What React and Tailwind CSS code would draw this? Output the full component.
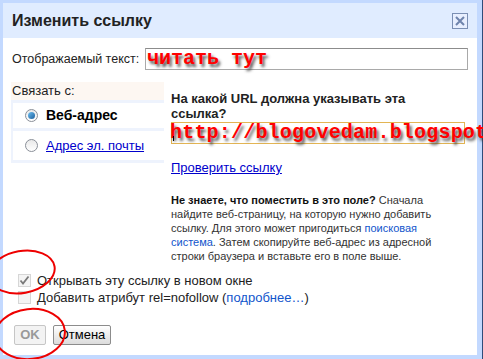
import React from "react";

const redText = {
  textShadow: "2px 3px 3px rgba(60,60,60,0.85)",
};

function Radio({ checked }) {
  return (
    <span className="w-[13px] h-[13px] rounded-full border border-[#8a8f98] bg-gradient-to-b from-[#e9e9e9] to-white flex items-center justify-center shrink-0">
      {checked && <span className="w-[7px] h-[7px] rounded-full bg-gradient-to-br from-[#6ec0f2] to-[#1c5f9c]" />}
    </span>
  );
}

function Check({ checked }) {
  return (
    <span className="w-[13px] h-[13px] border border-[#d6d6d6] bg-[#f4f4f4] flex items-center justify-center shrink-0">
      {checked && (
        <svg width="11" height="11" viewBox="0 0 11 11">
          <path d="M1.5 5.5 L4 8.5 L9.5 1.5" fill="none" stroke="#7a7a7a" strokeWidth="1.8" />
        </svg>
      )}
    </span>
  );
}

export default function App() {
  return (
    <div
      className="w-[483px] h-[359px] bg-[#c3d9ff] pt-[3px] pl-[3px] pr-[5px] pb-[4px] border-r border-[#2f4d7a]"
      style={{ fontFamily: '"Liberation Sans", Arial, sans-serif' }}
    >
      <div className="relative bg-white h-full flex flex-col text-[13px] text-black">
        {/* шапка */}
        <div className="h-[35px] bg-[#e0ecff] flex items-center justify-between pl-[9px] pr-[9px] shrink-0">
          <div className="text-[16px] font-bold text-[#222]">Изменить ссылку</div>
          <div className="w-[16px] h-[16px] border border-[#7b8fb4] bg-[#e8efff] flex items-center justify-center">
            <svg width="10" height="10" viewBox="0 0 10 10">
              <path d="M1 1 L9 9 M9 1 L1 9" stroke="#6f84ad" strokeWidth="2" />
            </svg>
          </div>
        </div>

        {/* отображаемый текст */}
        <div className="flex items-center mt-[10px] pl-[9px] pr-[9px]">
          <div className="w-[133px] text-[12.5px] text-[#222]">Отображаемый текст:</div>
          <div className="flex-1 h-[22px] border border-[#a9a9a9] border-t-[#8c8c8c] pl-[1px] flex items-center overflow-visible">
            <span
              className="text-[20px] font-bold text-[#ff0000] whitespace-pre leading-none"
              style={{ ...redText, fontFamily: '"Liberation Mono", "Courier New", monospace' }}
            >
              читать тут
            </span>
          </div>
        </div>

        {/* связать с */}
        <div className="flex mt-[12px] pl-[8px]">
          <div className="w-[153px] shrink-0">
            <div className="h-[18px] bg-[#fdf7f2] pl-[1px] flex items-center text-[#222]">Связать с:</div>
            <div className="bg-[#eef3fd] pt-[3px] pb-[3px] pr-0">
              <div className="bg-white h-[25px] flex items-center gap-[8px] pl-[12px] ml-[2px]">
                <Radio checked />
                <span className="font-bold text-[14px]">Веб-адрес</span>
              </div>
              <div className="bg-white h-[29px] mt-[3px] flex items-center gap-[8px] pl-[12px] ml-[2px]">
                <Radio />
                <span className="text-[#0000cc] underline">Адрес эл. почты</span>
              </div>
            </div>
          </div>

          <div className="ml-[7px] flex-1 min-w-0 pt-[9px]">
            <div className="font-bold text-[13px] leading-[15px] w-[270px] text-[#222]">
              На какой URL должна указывать эта ссылка?
            </div>
            <div className="mt-[1px] w-[294px] h-[22px] border border-[#e3b554] flex items-center relative overflow-visible">
              <span className="absolute left-[1px] top-[13px] w-px h-[5px] bg-black" />
              <span
                className="text-[20px] font-bold text-[#ff0000] whitespace-nowrap leading-none -ml-[2px] tracking-[0.2px]"
                style={{ ...redText, fontFamily: '"Liberation Mono", "Courier New", monospace' }}
              >
                http://blogovedam.blogspot
              </span>
            </div>
            <div className="mt-[14px] text-[#0000cc] underline">Проверить ссылку</div>
            <div className="mt-[15px] text-[11px] leading-[14px] text-[#333] w-[272px]">
              <span className="font-bold text-[#111]">Не знаете, что поместить в это поле?</span> Сначала
              найдите веб-страницу, на которую нужно добавить ссылку. Для этого может пригодиться{" "}
              <span className="text-[#1155cc]">поисковая система</span>. Затем скопируйте веб-адрес из
              адресной строки браузера и вставьте его в поле выше.
            </div>
          </div>
        </div>

        {/* флажки */}
        <div className="mt-[10px] pl-[15px] flex flex-col gap-[2px] leading-[15px]">
          <div className="flex items-center gap-[6px]">
            <Check checked />
            <span className="text-[#222]">Открывать эту ссылку в новом окне</span>
          </div>
          <div className="flex items-center gap-[6px]">
            <Check />
            <span className="text-[#222]">
              Добавить атрибут rel=nofollow (<span className="text-[#1155cc]">подробнее…</span>)
            </span>
          </div>
        </div>

        {/* кнопки */}
        <div className="mt-[20px] pl-[11px] flex gap-[7px]">
          <button className="w-[32px] h-[20px] border border-[#c6c6c6] bg-[#f3f3f3] rounded-[2px] text-[13px] font-bold text-[#999] flex items-center justify-center">
            OK
          </button>
          <button className="w-[58px] h-[20px] border border-[#8c8c8c] bg-gradient-to-b from-white to-[#dcdcdc] rounded-[2px] text-[13px] text-black flex items-center justify-center">
            Отмена
          </button>
        </div>

        {/* пометки красным */}
        <svg className="absolute left-[-3px] top-[-3px] pointer-events-none" width="100" height="359">
          <ellipse cx="22" cy="272" rx="33" ry="21" fill="none" stroke="#ee0000" strokeWidth="2" transform="rotate(-10 22 272)" />
          <ellipse cx="30" cy="334" rx="35" ry="25" fill="none" stroke="#ee0000" strokeWidth="2" transform="rotate(-6 30 334)" />
        </svg>
      </div>
    </div>
  );
}
